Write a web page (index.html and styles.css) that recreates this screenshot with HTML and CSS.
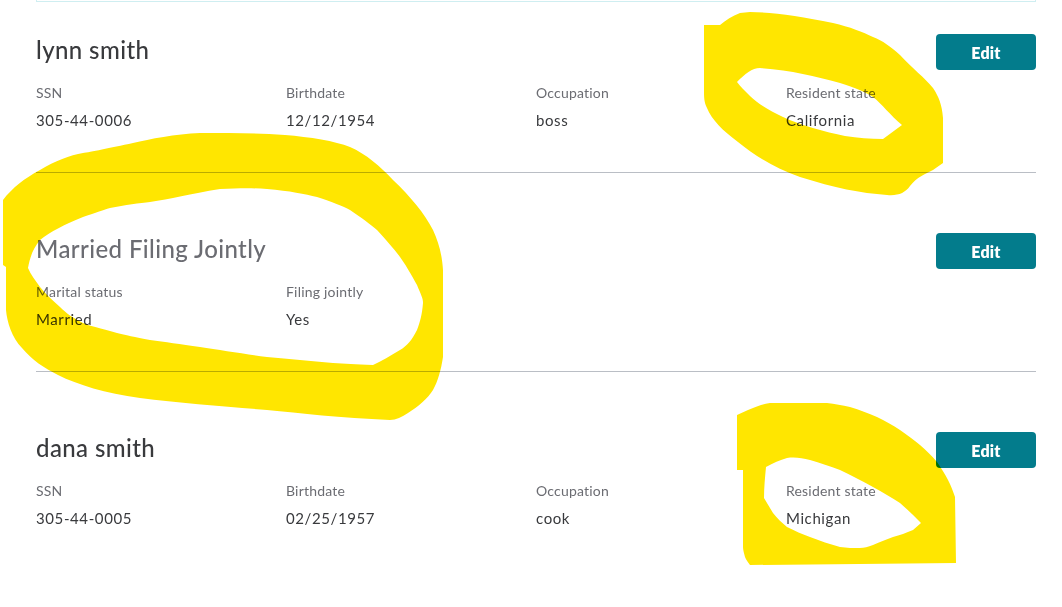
FILE: index.html
```html
<!DOCTYPE html>
<html lang="en">
<head>
    <meta charset="UTF-8">
    <meta name="viewport" content="width=device-width, initial-scale=1.0">
    <title>Personal Info</title>
    <link rel="stylesheet" href="styles.css">
</head>
<body>
    <div class="page">
        <div class="summary-box"></div>

        <!-- Taxpayer -->
        <div class="section section-first">
            <div class="section-header">
                <h2 class="person-name">lynn smith</h2>
                <button class="btn-edit">Edit</button>
            </div>
            <div class="fields">
                <div class="field">
                    <div class="field-label">SSN</div>
                    <div class="field-value">305-44-0006</div>
                </div>
                <div class="field">
                    <div class="field-label">Birthdate</div>
                    <div class="field-value">12/12/1954</div>
                </div>
                <div class="field">
                    <div class="field-label">Occupation</div>
                    <div class="field-value">boss</div>
                </div>
                <div class="field">
                    <div class="field-label">Resident state</div>
                    <div class="field-value">California</div>
                </div>
            </div>
        </div>

        <!-- Filing status -->
        <div class="section">
            <div class="section-header">
                <h2 class="status-title">Married Filing Jointly</h2>
                <button class="btn-edit">Edit</button>
            </div>
            <div class="fields">
                <div class="field">
                    <div class="field-label">Marital status</div>
                    <div class="field-value">Married</div>
                </div>
                <div class="field">
                    <div class="field-label">Filing jointly</div>
                    <div class="field-value">Yes</div>
                </div>
            </div>
        </div>

        <!-- Spouse -->
        <div class="section">
            <div class="section-header">
                <h2 class="person-name">dana smith</h2>
                <button class="btn-edit">Edit</button>
            </div>
            <div class="fields">
                <div class="field">
                    <div class="field-label">SSN</div>
                    <div class="field-value">305-44-0005</div>
                </div>
                <div class="field">
                    <div class="field-label">Birthdate</div>
                    <div class="field-value">02/25/1957</div>
                </div>
                <div class="field">
                    <div class="field-label">Occupation</div>
                    <div class="field-value">cook</div>
                </div>
                <div class="field">
                    <div class="field-label">Resident state</div>
                    <div class="field-value">Michigan</div>
                </div>
            </div>
        </div>
    </div>

    <!-- highlighter marks drawn over the screenshot -->
    <svg class="marks" width="1062" height="607" viewBox="0 0 1062 607">
        <path fill-rule="evenodd" d="M704,25 L720,25 C726,20 732,16 740,13 L750,12 C770,12 800,16 833,23 C850,27 863,32 873,37 C883,41 890,46 900,55 C912,68 925,78 933,88 C939,97 942,105 943,118 L943,163 L933,170 C925,174 917,177 910,186 C905,193 898,196 887,195 C860,193 835,188 800,177 C775,168 755,156 738,142 C722,130 712,120 707,108 C704,102 704,97 704,90 Z
            M737,82 C745,74 752,68 760,68 C790,70 815,76 840,83 C855,88 866,92 873,97 C882,104 890,115 902,125 L883,139 C870,139 858,138 845,136 C825,132 800,125 783,117 C770,111 758,104 750,96 C745,91 740,86 737,82 Z"/>
        <path fill-rule="evenodd" d="M3,200 L3,265 L6,267 L6,310 C7,322 12,338 22,348 C32,360 44,368 58,375 C78,385 105,393 140,398 C180,403 230,407 267,410 C300,413 340,418 390,420 C396,420 402,417 408,413 C418,407 428,398 433,390 C438,381 441,370 443,357 L443,270 C442,255 439,243 433,230 C425,214 410,196 393,180 C380,166 366,154 350,147 C335,141 310,137 285,135 C255,133 230,133 200,133 C175,134 150,139 133,143 C110,148 90,152 83,153 C70,155 55,161 40,170 C25,178 12,188 3,200 Z
            M28,268 C30,258 32,250 40,240 C50,232 65,224 83,217 C95,213 103,210 110,208 C125,205 140,203 150,202 C170,199 190,194 220,189 C240,188 255,188 267,189 C290,191 305,194 317,197 C332,202 343,206 350,210 C362,218 370,224 377,230 C386,240 395,250 400,257 C408,268 414,280 417,285 C421,295 423,298 423,303 C422,315 420,322 417,330 C412,340 407,346 400,350 C390,356 382,361 373,365 C355,364 345,364 333,363 C310,361 290,359 267,357 C245,354 220,350 200,347 C180,344 165,342 150,340 C135,337 125,335 117,333 C100,328 90,326 83,323 C73,318 66,313 60,307 C52,300 45,293 40,287 C35,280 31,275 28,268 Z"/>
        <path fill-rule="evenodd" d="M737,415 L748,410 L753,408 C758,406 763,404 770,403 L827,403 C835,404 842,405 850,407 C860,410 868,413 877,417 C885,421 893,425 900,430 C907,435 914,440 920,445 C926,450 932,456 937,462 C941,468 945,474 948,480 C951,486 953,491 955,497 L956,563 L750,565 C748,562 746,560 745,557 C744,553 743,550 743,547 L743,470 L737,470 Z
            M766,467 C773,463 780,460 787,458 C795,457 802,458 810,460 C820,463 830,466 840,470 C851,475 862,481 873,487 C882,492 891,497 900,503 C907,509 914,516 921,523 L913,530 C906,533 900,535 893,537 C886,540 879,542 873,545 C868,547 864,548 860,548 C853,548 847,548 840,547 C830,544 820,541 810,537 C802,534 795,531 787,527 C782,523 777,518 773,513 C770,508 767,503 764,498 C764,488 765,477 766,467 Z"/>
    </svg>
</body>
</html>
```

FILE: styles.css
```css
/* Reset */
* {
    margin: 0;
    padding: 0;
    box-sizing: border-box;
}

body {
    font-family: Lato, "Open Sans", sans-serif;
    background-color: #fff;
    color: #393a3d;
}

.page {
    width: 1000px;
    margin-left: 36px;
}

.summary-box {
    height: 2px;
    border: 1px solid #cfeef1;
    border-top: none;
}

.section {
    border-top: 1px solid #babec5;
    padding: 60px 0 41px;
}

.section-first {
    border-top: none;
    padding-top: 32px;
}

.section-header {
    display: flex;
    justify-content: space-between;
    align-items: center;
    height: 36px;
}

.person-name,
.status-title {
    font-size: 24px;
    font-weight: 500;
    line-height: 32px;
    letter-spacing: 0.4px;
    color: #393a3d;
    position: relative;
    top: -2px;
}

.status-title {
    color: #6b6c72;
}

.btn-edit {
    width: 100px;
    height: 36px;
    background-color: #037c8c;
    color: #fff;
    border: none;
    border-radius: 4px;
    font-family: inherit;
    font-size: 16px;
    font-weight: 800;
    letter-spacing: 0.2px;
    cursor: pointer;
}

.fields {
    display: grid;
    grid-template-columns: repeat(4, 250px);
    margin-top: 13px;
}

.field-label {
    font-size: 14px;
    line-height: 20px;
    letter-spacing: 0.2px;
    color: #6b6c72;
}

.field-value {
    font-size: 15px;
    line-height: 22px;
    letter-spacing: 0.6px;
    margin-top: 6px;
    color: #393a3d;
}

.marks {
    position: absolute;
    left: 0;
    top: 0;
    pointer-events: none;
    fill: #ffe600;
    mix-blend-mode: multiply;
}
```
